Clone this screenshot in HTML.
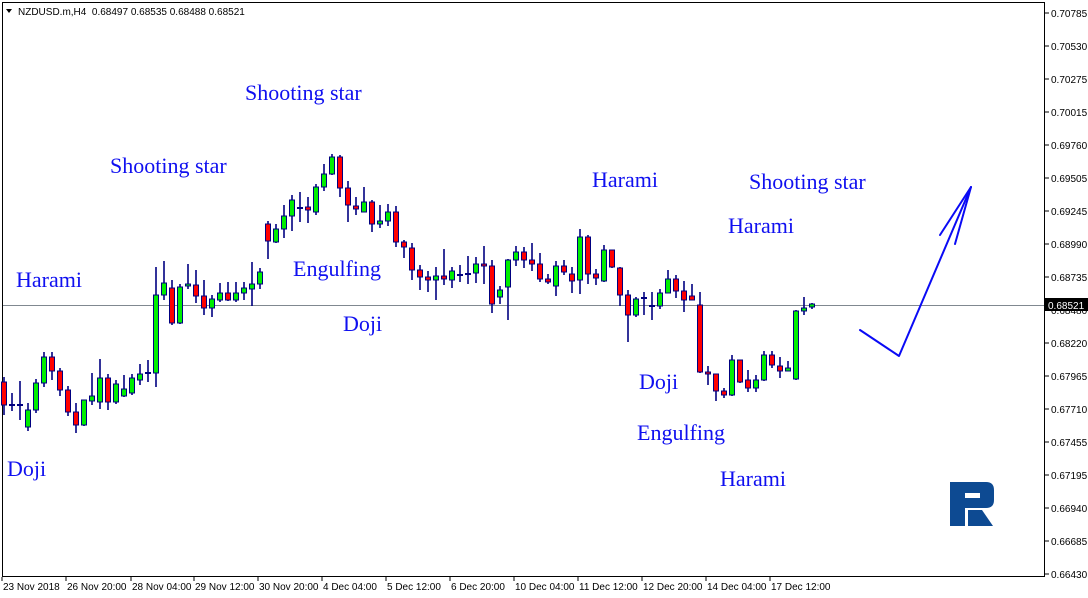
<!DOCTYPE html>
<html><head><meta charset="utf-8"><style>
html,body{margin:0;padding:0;background:#fff;width:1088px;height:598px;overflow:hidden}
svg{display:block}
.lbl{font-family:"Liberation Serif",serif;font-size:22px;fill:#1010f0}
.ax{font-family:"Liberation Sans",sans-serif;font-size:10px;fill:#000}
</style></head><body>
<svg id="s" width="1088" height="598" xmlns="http://www.w3.org/2000/svg">
<rect x="2.5" y="2.5" width="1042" height="574" fill="#fff" stroke="#000" stroke-width="1"/>
<line x1="3" y1="305.5" x2="1044" y2="305.5" stroke="#808890" stroke-width="1"/>
<g id="c"></g>
<text class="ax" x="18" y="15">NZDUSD.m,H4&#160;&#160;0.68497 0.68535 0.68488 0.68521</text>
<path d="M6 9 L12 9 L9 13 Z" fill="#000"/>
<g class="lbl">
<text x="245" y="100">Shooting star</text>
<text x="110" y="173">Shooting star</text>
<text x="16" y="287">Harami</text>
<text x="293" y="276">Engulfing</text>
<text x="343" y="331">Doji</text>
<text x="592" y="187">Harami</text>
<text x="749" y="189">Shooting star</text>
<text x="728" y="233">Harami</text>
<text x="639" y="389">Doji</text>
<text x="637" y="440">Engulfing</text>
<text x="720" y="486">Harami</text>
<text x="7" y="476">Doji</text>
</g>
<g fill="none" stroke="#0a0af5" stroke-width="2" stroke-linecap="round" stroke-linejoin="round">
<path d="M860 330 L899 356 L971 187"/>
<path d="M971 187 L940 235"/>
<path d="M971 187 L955 244"/>
</g>
<g fill="#0d4a92">
<path d="M950 482 H986 Q994 482 994 490 V500 Q994 508 986 508 H965 V526 H950 Z M965 493 V498 H980 V493 Z" fill-rule="evenodd"/>
<path d="M968 510 H982 L993 526 H968 Z"/>
</g>
<g id="ax"></g>
</svg>
<script>
var C=[[382,405,377,415],[405,405,393,411],[405,405,381,420],[427,410,403,431],[410,383,379,413],[383,357,352,387],[357,371,352,380],[371,390,368,396],[390,412,386,416],[412,425,403,433],[425,400,403,426],[401,396,373,405],[402,378,359,409],[378,402,374,410],[402,384,380,404],[396,389,375,397],[393,378,374,395],[380,374,364,385],[373,373,360,382],[373,295,267,387],[295,283,261,300],[288,323,280,325],[323,287,284,324],[286,284,264,289],[285,296,270,303],[296,308,280,315],[308,299,295,317],[300,293,283,302],[293,300,282,301],[300,293,282,302],[293,288,282,300],[289,284,262,306],[284,272,268,289],[224,241,221,259],[242,229,224,243],[229,216,205,238],[216,200,195,231],[208,208,192,222],[207,210,197,223],[212,187,184,215],[187,174,164,191],[174,157,154,175],[157,188,155,197],[188,205,181,222],[206,209,197,215],[212,202,187,212],[202,224,200,232],[224,221,205,228],[221,212,204,226],[212,242,206,247],[242,247,240,258],[248,270,243,280],[270,277,265,290],[277,280,271,292],[280,276,267,300],[276,279,249,285],[280,271,267,288],[275,275,265,282],[274,274,256,284],[273,264,257,283],[264,266,246,284],[266,304,260,313],[297,290,286,304],[287,260,259,320],[260,252,246,266],[252,260,247,268],[260,264,243,271],[264,279,253,282],[279,282,274,284],[286,266,261,296],[266,272,260,275],[274,281,267,293],[280,237,229,294],[237,274,235,284],[274,278,269,285],[281,250,245,282],[250,267,250,268],[268,295,267,306],[295,315,290,342],[315,299,297,317],[298,298,292,315],[306,306,292,320],[306,293,289,309],[293,279,270,293],[279,291,275,298],[291,300,281,312],[296,300,284,300],[305,372,292,373],[372,374,366,385],[374,391,374,401],[391,395,388,398],[395,360,355,396],[360,382,360,383],[380,388,370,392],[388,380,375,392],[380,355,351,381],[355,365,351,368],[366,371,357,378],[371,368,361,371],[379,311,310,380],[311,308,297,315],[307,304,303,309]];
var h='';
for(var i=0;i<C.length;i++){var c=C[i],x=4+i*8;
h+='<line x1="'+x+'" x2="'+x+'" y1="'+c[2]+'" y2="'+c[3]+'" stroke="#000080" stroke-width="1.6"/>';
var t=Math.min(c[0],c[1]),b=Math.max(c[0],c[1]);
if(b-t<1.5){h+='<line x1="'+(x-3)+'" x2="'+(x+3)+'" y1="'+t+'" y2="'+t+'" stroke="#000080" stroke-width="2"/>';}
else h+='<rect x="'+(x-2.5)+'" y="'+t+'" width="5" height="'+(b-t)+'" fill="'+(c[1]<c[0]?'#00ee00':'#ff0000')+'" stroke="#000080" stroke-width="1"/>';}
document.getElementById('c').innerHTML=h;
var p=['0.70785','0.70530','0.70275','0.70015','0.69760','0.69505','0.69245','0.68990','0.68735','0.68480','0.68220','0.67965','0.67710','0.67455','0.67195','0.66940','0.66685','0.66430'];
var a='';
for(var j=0;j<p.length;j++){var y=13+j*33;a+='<line x1="1045" x2="1049" y1="'+y+'" y2="'+y+'" stroke="#000"/><text class="ax" x="1051" y="'+(y+4)+'">'+p[j]+'</text>';}
a+='<rect x="1045" y="298" width="43" height="13" fill="#000"/><text class="ax" x="1048" y="309" style="fill:#fff">0.68521</text>';
var d=[['23 Nov 2018',2],['26 Nov 20:00',66],['28 Nov 04:00',131],['29 Nov 12:00',194],['30 Nov 20:00',258],['4 Dec 04:00',322],['5 Dec 12:00',386],['6 Dec 20:00',450],['10 Dec 04:00',514],['11 Dec 12:00',578],['12 Dec 20:00',642],['14 Dec 04:00',706],['17 Dec 12:00',770]];
for(var k=0;k<d.length;k++){a+='<line x1="'+d[k][1]+'" x2="'+d[k][1]+'" y1="577" y2="581" stroke="#000"/><text class="ax" x="'+(d[k][1]+1)+'" y="590">'+d[k][0]+'</text>';}
document.getElementById('ax').innerHTML=a;
</script>
</body></html>
